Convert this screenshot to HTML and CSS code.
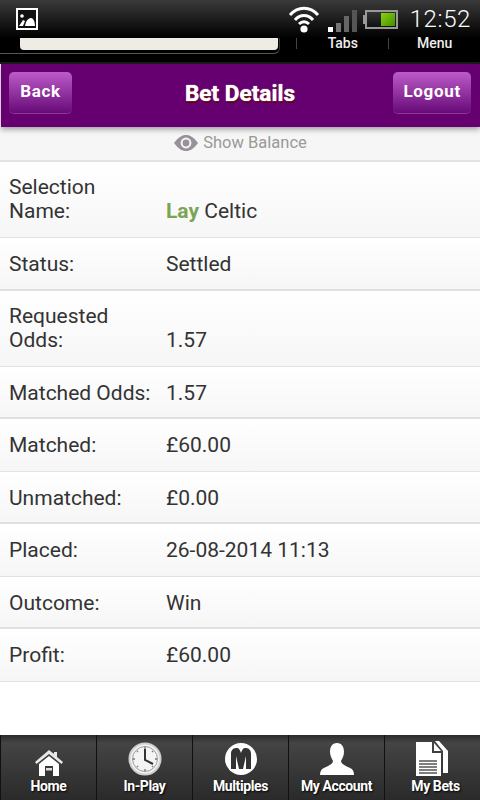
FILE: index.html
```html
<!DOCTYPE html>
<html lang="en">
<head>
  <meta charset="UTF-8" />
  <title>Bet Details</title>
  <meta name="viewport" content="width=device-width, initial-scale=1.0" />
  <link rel="stylesheet" href="styles.css">
</head>
<body>

  <!-- Android status bar -->
  <div class="status-bar">
    <svg class="pic-icon" width="22" height="22" viewBox="0 0 22 22">
      <rect x="1" y="1" width="20" height="20" fill="#111" stroke="#fff" stroke-width="2"/>
      <circle cx="6" cy="8" r="1.8" fill="#fff"/>
      <path d="M3 18 L7 12 L9 13 L7 18 Z M9 18 C10 12 13 10 15 10 C17 10 19 13 19 18 Z" fill="#fff"/>
    </svg>
    <div class="status-right">
      <svg class="wifi" width="32" height="28" viewBox="0 0 32 28">
        <path d="M2 10 C10 1 22 1 30 10 M7 15 C12 9 20 9 25 15 M11 19 C14 16 18 16 21 19" fill="none" stroke="#fff" stroke-width="3"/>
        <circle cx="16" cy="24" r="3.6" fill="#fff"/>
      </svg>
      <div class="signal">
        <span class="s1"></span><span class="s2"></span><span class="s3"></span><span class="s4"></span>
      </div>
      <span class="battery-nub"></span>
      <div class="battery"><span class="battery-fill"></span></div>
      <span class="clock">12:52</span>
    </div>
  </div>

  <!-- browser toolbar, cut off by the status bar -->
  <div class="browser-bar">
    <div class="url-wrap"><div class="url-box"></div></div>
    <div class="browser-btn">Tabs</div>
    <div class="browser-btn">Menu</div>
  </div>

  <div class="header">
    <a class="head-btn">Back</a>
    <h1>Bet Details</h1>
    <a class="head-btn logout">Logout</a>
  </div>

  <div class="balance">
    <svg width="26" height="18" viewBox="0 0 26 18">
      <path d="M1 9 C6 2 10 1 13 1 C16 1 20 2 25 9 C20 16 16 17 13 17 C10 17 6 16 1 9 Z" fill="#96919a"/>
      <circle cx="13" cy="9" r="5.4" fill="#f6f6f6"/>
      <circle cx="13" cy="9" r="3.4" fill="#96919a"/>
    </svg>
    <span>Show Balance</span>
  </div>

  <div class="details">
    <div class="row tall">
      <div class="label">Selection Name:</div>
      <div class="value"><b class="lay">Lay</b> Celtic</div>
    </div>
    <div class="row thick">
      <div class="label">Status:</div>
      <div class="value">Settled</div>
    </div>
    <div class="row tall">
      <div class="label">Requested Odds:</div>
      <div class="value">1.57</div>
    </div>
    <div class="row thick">
      <div class="label">Matched Odds:</div>
      <div class="value">1.57</div>
    </div>
    <div class="row">
      <div class="label">Matched:</div>
      <div class="value">£60.00</div>
    </div>
    <div class="row thick">
      <div class="label">Unmatched:</div>
      <div class="value">£0.00</div>
    </div>
    <div class="row">
      <div class="label">Placed:</div>
      <div class="value">26-08-2014 11:13</div>
    </div>
    <div class="row thick">
      <div class="label">Outcome:</div>
      <div class="value">Win</div>
    </div>
    <div class="row">
      <div class="label">Profit:</div>
      <div class="value">£60.00</div>
    </div>
  </div>

  <div class="footer">
    <div class="tab">
      <svg width="28" height="26" viewBox="0 0 28 26">
        <path d="M14 0 L19 4 V2 H22 V7 L28 12 L26.5 14 L14 4 L1.5 14 L0 12 Z" fill="#e8e8e8"/>
        <path d="M4 14 L14 6 L24 14 V26 H18 V16 H10 V26 H4 Z" fill="#fff"/>
        <rect x="11" y="18" width="6" height="2.5" fill="#ddd"/>
      </svg>
      <span>Home</span>
    </div>
    <div class="tab">
      <svg width="34" height="34" viewBox="0 0 34 34">
        <circle cx="17" cy="17" r="15.5" fill="#f4f4f4" stroke="#cfcfcf" stroke-width="2"/>
        <circle cx="17" cy="17" r="12.5" fill="#f4f4f4" stroke="#9a9a9a" stroke-width="1"/>
        <path d="M17 7 V18 L25 22" fill="none" stroke="#333" stroke-width="2"/>
        <path d="M17 5 V7 M17 27 V29 M5 17 H7 M27 17 H29 M9 9 L10 10 M25 9 L24 10 M9 25 L10 24 M25 25 L24 24" stroke="#777" stroke-width="1.4"/>
      </svg>
      <span>In-Play</span>
    </div>
    <div class="tab">
      <svg width="34" height="34" viewBox="0 0 34 34">
        <circle cx="17" cy="17" r="16" fill="#fff"/>
        <path d="M7 27 V12 C7 7 10 6 13 6 C15 6 16 8 17 11 C18 8 19 6 21 6 C24 6 27 7 27 12 V27 H22 V14 L19 27 H15 L12 14 V27 Z" fill="#333"/>
      </svg>
      <span>Multiples</span>
    </div>
    <div class="tab">
      <svg width="36" height="34" viewBox="0 0 36 34">
        <path d="M18 1 C23 1 25 5 25 10 C25 14 23 17 22 19 C22 22 27 24 31 26 C34 27 35 30 35 33 H1 C1 30 2 27 5 26 C9 24 14 22 14 19 C13 17 11 14 11 10 C11 5 13 1 18 1 Z" fill="#fff"/>
      </svg>
      <span>My Account</span>
    </div>
    <div class="tab">
      <svg width="33" height="35" viewBox="0 0 33 35">
        <path d="M8 0 H23 L32 10 V32 H27 V10 L19 0 Z" fill="#fff"/>
        <path d="M0 1 H16 V12 H25 V35 H0 Z" fill="#fff"/>
        <path d="M18 2 L25 10 H18 Z" fill="#fff"/>
        <path d="M3 20 H21 M3 23 H21 M3 26 H21 M3 29 H21 M3 32 H21" stroke="#555" stroke-width="1.5"/>
      </svg>
      <span>My Bets</span>
    </div>
  </div>

</body>
</html>
```

FILE: styles.css
```css
* { box-sizing: border-box; }

body {
  margin: 0;
  width: 480px;
  height: 800px;
  overflow: hidden;
  display: flex;
  flex-direction: column;
  background-color: #fff;
  color: #333;
  font-family: 'Roboto', 'Liberation Sans', sans-serif;
}

.status-bar {
  height: 38px;
  flex: none;
  display: flex;
  justify-content: space-between;
  align-items: center;
  padding: 0 9px 0 16px;
  background: linear-gradient(#3a3a3a, #000);
}

.pic-icon { display: block; margin-top: -1px; }

.status-right {
  display: flex;
  align-items: center;
}

.wifi { margin-top: -1px; }

.signal {
  display: flex;
  align-items: flex-end;
  gap: 3px;
  height: 22px;
  margin: 4px 0 0 8px;
}

.signal span { width: 5px; display: block; }
.signal .s1 { height: 5px; background: #fff; }
.signal .s2 { height: 9px; background: #777; }
.signal .s3 { height: 16px; background: #666; }
.signal .s4 { height: 22px; background: #555; }

.battery-nub {
  width: 2px;
  height: 9px;
  margin-left: 6px;
  background: #999;
}

.battery {
  width: 33px;
  height: 19px;
  margin: 0 12px 0 0;
  border: 2px solid #999;
  background: linear-gradient(#333, #111);
  display: flex;
  justify-content: flex-end;
  padding: 1px;
}

.battery-fill {
  width: 14px;
  background: linear-gradient(135deg, #8fd210, #3f8f00);
}

.clock {
  color: #fff;
  font-size: 24px;
  font-weight: 300;
  letter-spacing: 0.6px;
}

.browser-bar {
  height: 26px;
  flex: none;
  display: flex;
  background: #000;
  border-bottom: 2px solid #1c1c1c;
}

.url-wrap {
  width: 281px;
  height: 16px;
  padding: 0 1px 3px 20px;
  border-bottom: 1px solid #555;
  border-right: 1px solid #333;
  border-bottom-right-radius: 6px;
}

.url-box {
  height: 12px;
  background: #efebe5;
  border-radius: 0 0 4px 4px;
}

.browser-btn {
  width: 92px;
  height: 11px;
  line-height: 10px;
  text-align: center;
  color: #eee;
  font-size: 14px;
  font-weight: 500;
  border-left: 1px solid #444;
}

.url-wrap + .browser-btn { margin-left: 16px; }

.header {
  height: 63px;
  flex: none;
  margin-left: 1px;
  padding: 8px 9px 0 8px;
  display: grid;
  grid-template-columns: 1fr auto 1fr;
  align-items: start;
  background: #660070;
  box-shadow: 0 2px 6px rgba(0, 0, 0, 0.4);
  position: relative;
}

.header h1 {
  margin: 8px 0 0;
  font-size: 22.6px;
  line-height: 27px;
  font-weight: 700;
  color: #fff;
  text-shadow: 0 0 1px #fff, 1px 2px 0 #5a0010;
}

.head-btn {
  justify-self: start;
  min-width: 63px;
  height: 41px;
  padding: 0 10px;
  line-height: 38px;
  text-align: center;
  color: #fff;
  font-size: 17px;
  font-weight: 700;
  border-radius: 5px;
  background: linear-gradient(#bb5cc8, #680a78);
  box-shadow: 0 1px 0 #8b3a98;
  letter-spacing: 0.7px;
}

.head-btn.logout { justify-self: end; }

.balance {
  height: 33px;
  flex: none;
  display: flex;
  justify-content: center;
  align-items: center;
  gap: 4px;
  color: #999;
  font-size: 16.5px;
  background: #f6f6f6;
  padding-bottom: 2px;
}

.details {
  flex: 1;
  background: #fff;
  border-top: 2px solid #e2e2e2;
}

.row {
  height: 52.5px;
  display: flex;
  align-items: flex-end;
  padding: 0 9px 14px;
  font-size: 21px;
  line-height: 24px;
  background: linear-gradient(#fff, #f6f6f6);
  border-bottom: 1px solid #e2e2e2;
}

.row.tall { height: 76px; }
.row.thick { border-bottom: 2px solid #e0e0e0; padding-bottom: 12.5px; }

.label {
  width: 157px;
  flex: none;
  padding-right: 40px;
}

.row:nth-child(4) .label { padding-right: 0; white-space: nowrap; }

.lay { color: #7ba554; font-weight: 700; }

.footer {
  height: 65px;
  flex: none;
  display: flex;
  background: linear-gradient(#2b2b2b, #444 12%, #2a2a2a);
}

.tab {
  width: 96px;
  border-left: 1px solid #111;
  display: flex;
  flex-direction: column;
  align-items: center;
  justify-content: flex-end;
  color: #fff;
  font-size: 14px;
  letter-spacing: -0.4px;
  font-weight: 700;
  padding-bottom: 6px;
  text-shadow: 1px 1px 2px #000;
}

.tab svg { margin-bottom: 2px; }
.tab:last-child span { margin-left: 6px; }
```
